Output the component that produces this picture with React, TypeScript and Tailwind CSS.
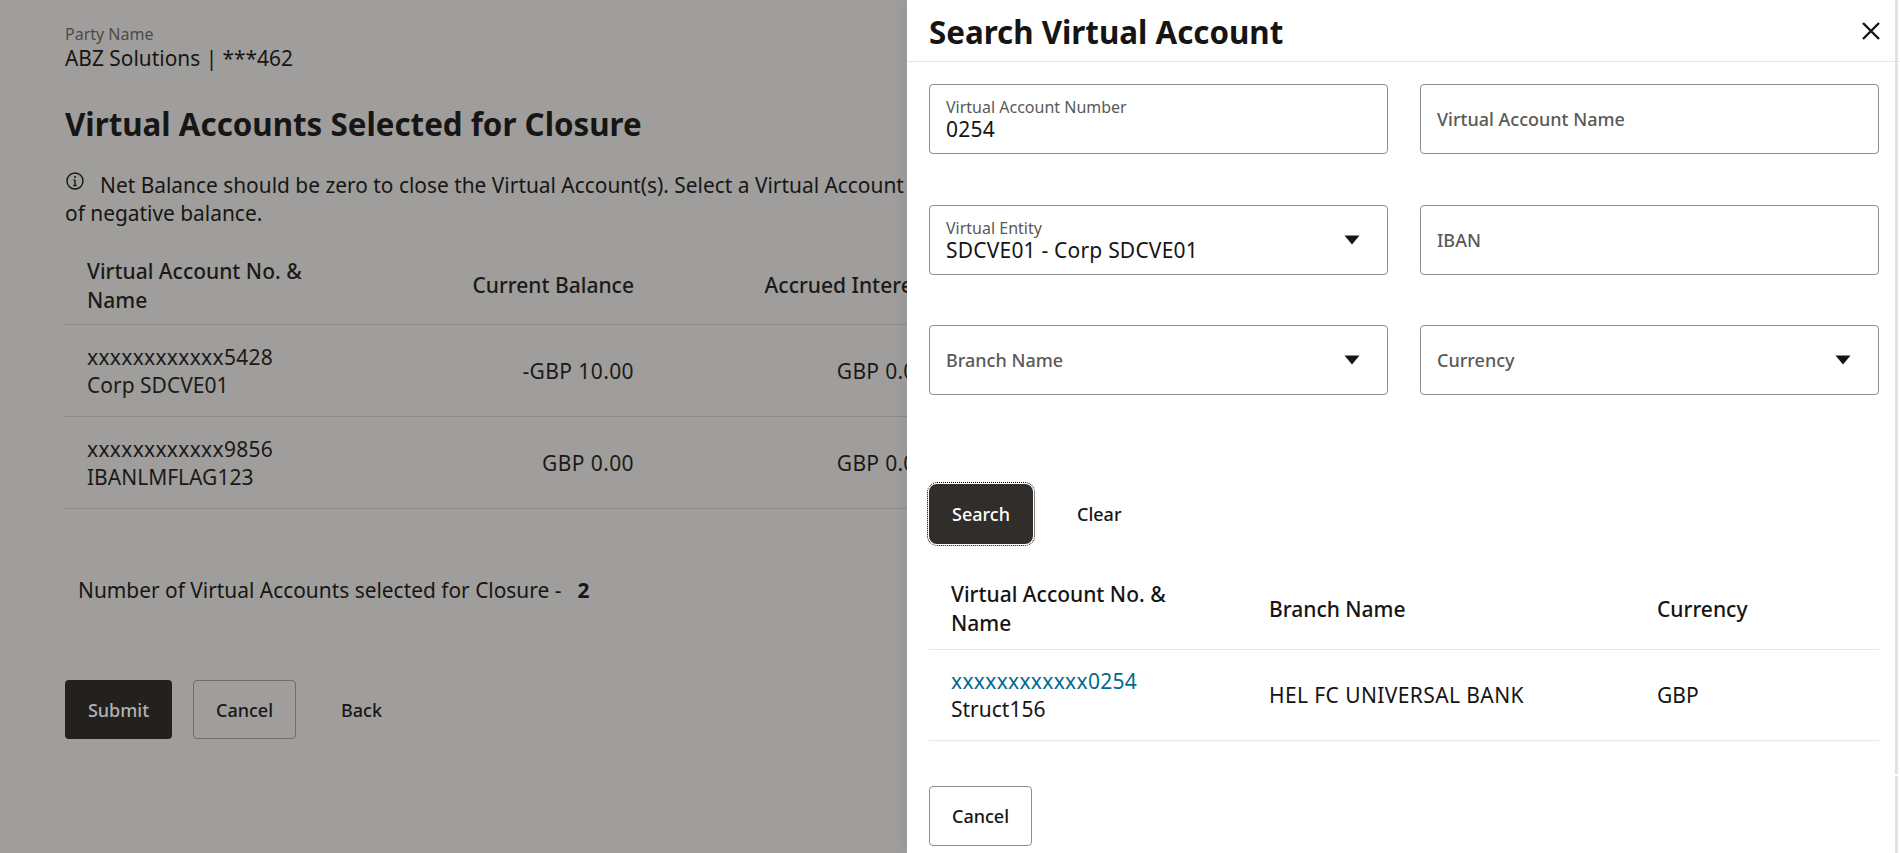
import React from "react";

function Caret() {
  return (
    <svg width="16" height="10" viewBox="0 0 16 10" className="shrink-0">
      <path d="M0.5 0.5H15.5L8 9.5Z" fill="#161513" />
    </svg>
  );
}

function Field({ label, value, select }: { label: string; value?: string; select?: boolean }) {
  return (
    <div className="flex h-[70px] items-center rounded-[4px] border border-[#8f8e8c] bg-white pl-[16px] pr-[27px]">
      <div className="min-w-0 flex-1">
        {value ? (
          <>
            <div className="text-[16px] leading-[20px] text-[#5a5957]">{label}</div>
            <div className="text-[21px] leading-[24px] tracking-[0.2px] text-[#161513]">{value}</div>
          </>
        ) : (
          <div className="text-[18px] font-medium leading-[24px] text-[#5a5957]">{label}</div>
        )}
      </div>
      {select && <Caret />}
    </div>
  );
}

function AccountRow({ no, name, balance, interest }: { no: string; name: string; balance: string; interest: string }) {
  return (
    <tr className="border-b border-[#8c8b89] text-[21px] leading-[28px] text-[#1b1a18]">
      <td className="py-[17.5px] pl-[22px]">
        <div className="tracking-[0.3px]">{no}</div>
        <div>{name}</div>
      </td>
      <td className="pr-[22px] text-right tracking-[0.4px]">{balance}</td>
      <td className="pr-[22px] text-right tracking-[0.3px]">{interest}</td>
      <td />
    </tr>
  );
}

export default function App() {
  return (
    <div className="relative h-[853px] w-full overflow-hidden bg-[#9f9e9c] font-['Noto_Sans',sans-serif] text-[#171614]">
      <div className="pl-[65px] pt-[25px]">
        <div className="text-[16px] leading-[18px] text-[#4c4b49]">Party Name</div>
        <div className="pt-[1px] text-[20.9px] leading-[29px]">ABZ Solutions | ***462</div>
        <h1 className="mt-[31px] text-[31.3px] font-bold leading-[40px]">Virtual Accounts Selected for Closure</h1>
        <div className="mt-[27px] text-[20.9px] leading-[28px]">
          <svg width="20" height="20" viewBox="0 0 20 20" className="mr-[15px] inline-block align-[2px]">
            <circle cx="10" cy="10" r="8" fill="none" stroke="#171614" strokeWidth="1.4" />
            <path d="M10 9V14.5M8.4 14.5H11.6M8.6 9H10" fill="none" stroke="#171614" strokeWidth="1.4" />
            <circle cx="10" cy="6" r="1" fill="#171614" />
          </svg>
          Net Balance should be zero to close the Virtual Account(s). Select a Virtual Account
          <br />
          of negative balance.
        </div>
        <table className="mt-[22px] w-[1000px] table-fixed border-collapse">
          <colgroup>
            <col className="w-[270px]" />
            <col className="w-[321px]" />
            <col className="w-[294px]" />
            <col />
          </colgroup>
          <thead>
            <tr className="border-b border-[#8c8b89] text-left text-[21px] font-medium leading-[29px] text-[#1b1a18]">
              <th className="pb-[9px] pl-[22px] pt-[8px] font-medium">Virtual Account No. &amp; Name</th>
              <th className="pb-[10px] pr-[22px] pt-[7px] text-right font-medium">Current Balance</th>
              <th className="pb-[10px] pr-[19px] pt-[7px] text-right font-medium">Accrued Interest</th>
              <th />
            </tr>
          </thead>
          <tbody>
            <AccountRow no="xxxxxxxxxxxx5428" name="Corp SDCVE01" balance="-GBP 10.00" interest="GBP 0.00" />
            <AccountRow no="xxxxxxxxxxxx9856" name="IBANLMFLAG123" balance="GBP 0.00" interest="GBP 0.00" />
          </tbody>
        </table>
        <div className="mt-[67px] flex items-center pl-[13px] text-[20.9px] leading-[29px]">
          Number of Virtual Accounts selected for Closure -<span className="ml-[16px] font-bold">2</span>
        </div>
        <div className="mt-[75px] flex items-center text-[18px] font-medium">
          <button className="h-[59px] w-[107px] rounded-[4px] bg-[#23211f] pt-[1px] text-[#b3b2b0]">Submit</button>
          <button className="ml-[21px] h-[59px] w-[103px] rounded-[4px] border border-[#6f6e6c] pt-[1px]">Cancel</button>
          <button className="ml-[45px] pt-[1px]">Back</button>
        </div>
      </div>

      <div className="absolute inset-y-0 left-[907px] right-0 bg-white shadow-[-6px_0_12px_rgba(0,0,0,0.04)]">
        <div className="flex h-[62px] items-center justify-between border-b border-[#e6e6e5] pl-[22px] pr-[19px]">
          <h2 className="pt-[2px] text-[31.3px] font-bold leading-[40px] text-[#161513]">Search Virtual Account</h2>
          <svg width="20" height="20" viewBox="0 0 20 20">
            <path d="M2 2L18 18M18 2L2 18" stroke="#161513" strokeWidth="2.4" />
          </svg>
        </div>
        <div className="pl-[22px] pr-[21px] pt-[22px]">
          <div className="grid grid-cols-2 gap-x-[32px] gap-y-[50.5px]">
            <Field label="Virtual Account Number" value="0254" />
            <Field label="Virtual Account Name" />
            <Field label="Virtual Entity" value="SDCVE01 - Corp SDCVE01" select />
            <Field label="IBAN" />
            <Field label="Branch Name" select />
            <Field label="Currency" select />
          </div>
          <div className="mt-[89px] flex items-center text-[18px] font-medium">
            <button className="h-[60px] w-[104px] rounded-[8px] bg-[#312d2a] pt-[1px] text-white outline-1 outline-offset-1 outline-dotted outline-black">
              Search
            </button>
            <button className="ml-[44px] pt-[1px] text-[#161513]">Clear</button>
          </div>
          <table className="mt-[30px] w-full table-fixed border-collapse text-[21px] leading-[28px] text-[#161513]">
            <colgroup>
              <col className="w-[340px]" />
              <col className="w-[388px]" />
              <col />
            </colgroup>
            <thead>
              <tr className="border-b border-[#e6e6e5] text-left leading-[29px]">
                <th className="pb-[11px] pl-[22px] pr-[60px] pt-[6px] font-medium">Virtual Account No. &amp; Name</th>
                <th className="pb-[11px] pt-[6px] font-medium">Branch Name</th>
                <th className="pb-[11px] pt-[6px] font-medium">Currency</th>
              </tr>
            </thead>
            <tbody>
              <tr className="border-b border-[#e6e6e5]">
                <td className="py-[17px] pl-[22px]">
                  <div className="tracking-[0.3px] text-[#006b8f]">xxxxxxxxxxxx0254</div>
                  <div>Struct156</div>
                </td>
                <td className="tracking-[0.4px]">HEL FC UNIVERSAL BANK</td>
                <td>GBP</td>
              </tr>
            </tbody>
          </table>
          <button className="mt-[45px] h-[60px] w-[103px] rounded-[4px] border border-[#8f8e8c] text-[18px] font-medium text-[#161513]">
            Cancel
          </button>
        </div>
        <div className="absolute right-[2px] top-0 h-[774px] w-[3px] bg-[#e2e2e1]" />
        <div className="absolute bottom-0 right-[2px] top-[776px] w-[3px] bg-[#e2e2e1]" />
      </div>
    </div>
  );
}
